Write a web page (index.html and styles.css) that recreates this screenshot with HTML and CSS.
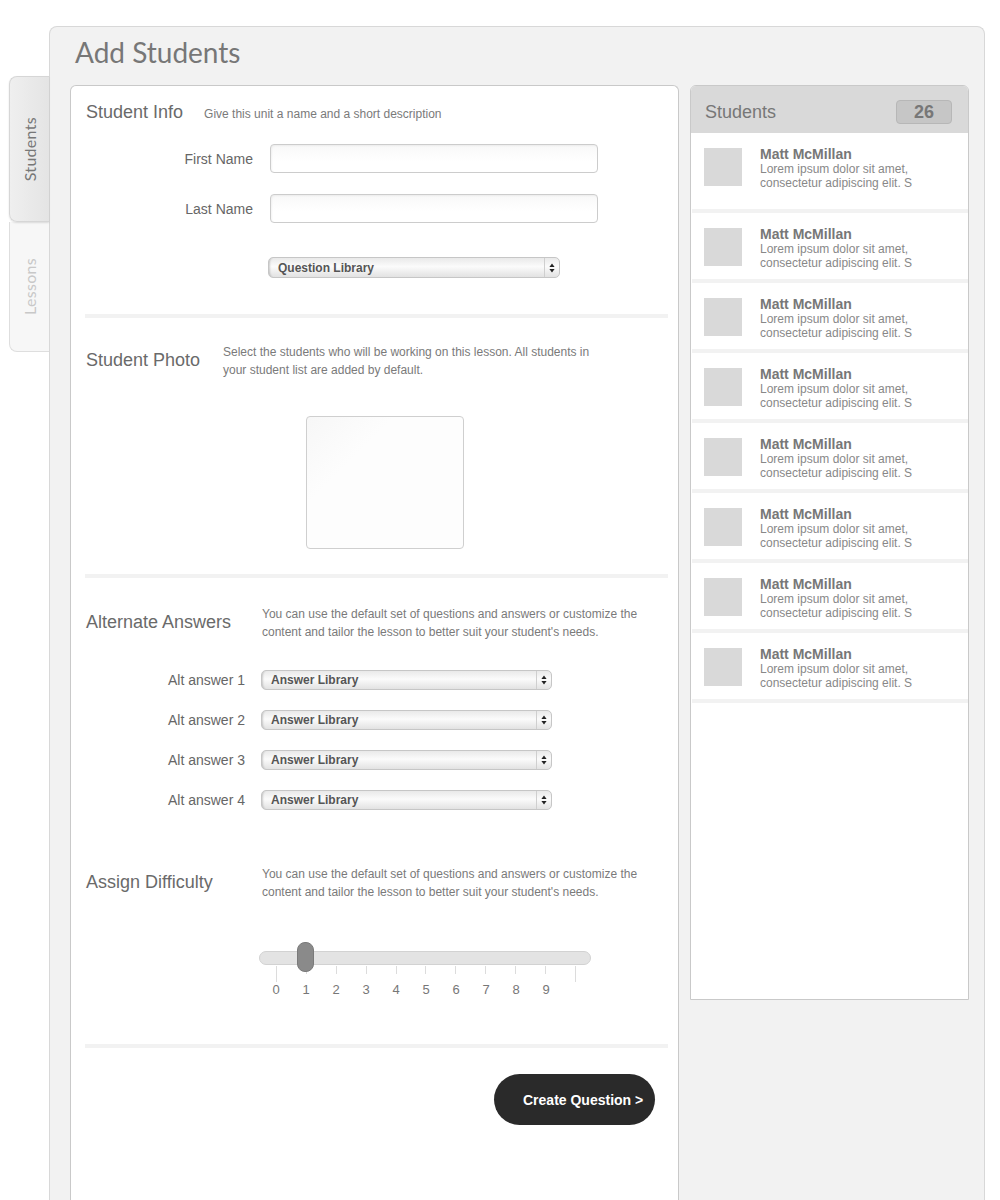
FILE: index.html
```html
<!DOCTYPE html>
<html lang="en">
<head>
  <meta charset="UTF-8">
  <meta name="viewport" content="width=device-width, initial-scale=1.0">
  <title>Add Students</title>
  <link rel="stylesheet" href="styles.css">
</head>
<body>
  <div class="page">
    <nav class="side-tabs">
      <div class="side-tab active"><span>Students</span></div>
      <div class="side-tab"><span>Lessons</span></div>
    </nav>

    <div class="frame">
      <h1 class="frame-title">Add Students</h1>
      <div class="frame-body">
        <form class="editor">
          <section class="block block-info">
            <div class="head head-inline">
              <h2 class="head-title">Student Info</h2>
              <p class="head-desc">Give this unit a name and a short description</p>
            </div>
            <div class="field">
              <label class="field-label">First Name</label>
              <div class="text-input"></div>
            </div>
            <div class="field">
              <label class="field-label">Last Name</label>
              <div class="text-input"></div>
            </div>
            <div class="select select-question">
              <span>Question Library</span>
              <i class="select-arrows"><svg width="6" height="10" viewBox="0 0 6 10"><path d="M3 0.5L5.6 4H0.4z M3 9.5L5.6 6H0.4z" fill="#222"/></svg></i>
            </div>
          </section>

          <div class="rule"></div>

          <section class="block block-photo">
            <div class="head">
              <h2 class="head-title">Student Photo</h2>
              <p class="head-desc">Select the students who will be working on this lesson. All students in<br>your student list are added by default.</p>
            </div>
            <div class="photo-box"></div>
          </section>

          <div class="rule"></div>

          <section class="block block-alt">
            <div class="head head-wide">
              <h2 class="head-title">Alternate Answers</h2>
              <p class="head-desc">You can use the default set of questions and answers or customize the<br>content and tailor the lesson to better suit your student's needs.</p>
            </div>
            <div class="alt-list">
              <div class="alt-row">
                <label class="alt-label">Alt answer 1</label>
                <div class="select"><span>Answer Library</span><i class="select-arrows"><svg width="6" height="10" viewBox="0 0 6 10"><path d="M3 0.5L5.6 4H0.4z M3 9.5L5.6 6H0.4z" fill="#222"/></svg></i></div>
              </div>
              <div class="alt-row">
                <label class="alt-label">Alt answer 2</label>
                <div class="select"><span>Answer Library</span><i class="select-arrows"><svg width="6" height="10" viewBox="0 0 6 10"><path d="M3 0.5L5.6 4H0.4z M3 9.5L5.6 6H0.4z" fill="#222"/></svg></i></div>
              </div>
              <div class="alt-row">
                <label class="alt-label">Alt answer 3</label>
                <div class="select"><span>Answer Library</span><i class="select-arrows"><svg width="6" height="10" viewBox="0 0 6 10"><path d="M3 0.5L5.6 4H0.4z M3 9.5L5.6 6H0.4z" fill="#222"/></svg></i></div>
              </div>
              <div class="alt-row">
                <label class="alt-label">Alt answer 4</label>
                <div class="select"><span>Answer Library</span><i class="select-arrows"><svg width="6" height="10" viewBox="0 0 6 10"><path d="M3 0.5L5.6 4H0.4z M3 9.5L5.6 6H0.4z" fill="#222"/></svg></i></div>
              </div>
            </div>

            <div class="head head-wide head-difficulty">
              <h2 class="head-title">Assign Difficulty</h2>
              <p class="head-desc">You can use the default set of questions and answers or customize the<br>content and tailor the lesson to better suit your student's needs.</p>
            </div>
            <div class="slider">
              <div class="slider-track"></div>
              <div class="slider-thumb"></div>
              <div class="slider-ticks">
                <i class="tall"></i><i></i><i></i><i></i><i></i><i></i><i></i><i></i><i></i><i></i><i class="tall"></i>
              </div>
              <div class="slider-scale">
                <span>0</span><span>1</span><span>2</span><span>3</span><span>4</span><span>5</span><span>6</span><span>7</span><span>8</span><span>9</span>
              </div>
            </div>
          </section>

          <div class="rule rule-last"></div>

          <div class="actions">
            <button type="button" class="btn-create">Create Question &gt;</button>
          </div>
        </form>

        <aside class="roster">
          <div class="roster-head">
            <span class="roster-title">Students</span>
            <span class="roster-count">26</span>
          </div>
          <ul class="roster-list">
            <li class="student first"><div class="avatar"></div><div class="student-info"><div class="student-name">Matt McMillan</div><div class="student-text">Lorem ipsum dolor sit amet,<br>consectetur adipiscing elit. S</div></div></li>
            <li class="student"><div class="avatar"></div><div class="student-info"><div class="student-name">Matt McMillan</div><div class="student-text">Lorem ipsum dolor sit amet,<br>consectetur adipiscing elit. S</div></div></li>
            <li class="student"><div class="avatar"></div><div class="student-info"><div class="student-name">Matt McMillan</div><div class="student-text">Lorem ipsum dolor sit amet,<br>consectetur adipiscing elit. S</div></div></li>
            <li class="student"><div class="avatar"></div><div class="student-info"><div class="student-name">Matt McMillan</div><div class="student-text">Lorem ipsum dolor sit amet,<br>consectetur adipiscing elit. S</div></div></li>
            <li class="student"><div class="avatar"></div><div class="student-info"><div class="student-name">Matt McMillan</div><div class="student-text">Lorem ipsum dolor sit amet,<br>consectetur adipiscing elit. S</div></div></li>
            <li class="student"><div class="avatar"></div><div class="student-info"><div class="student-name">Matt McMillan</div><div class="student-text">Lorem ipsum dolor sit amet,<br>consectetur adipiscing elit. S</div></div></li>
            <li class="student"><div class="avatar"></div><div class="student-info"><div class="student-name">Matt McMillan</div><div class="student-text">Lorem ipsum dolor sit amet,<br>consectetur adipiscing elit. S</div></div></li>
            <li class="student"><div class="avatar"></div><div class="student-info"><div class="student-name">Matt McMillan</div><div class="student-text">Lorem ipsum dolor sit amet,<br>consectetur adipiscing elit. S</div></div></li>
          </ul>
        </aside>
      </div>
    </div>
  </div>
</body>
</html>
```

FILE: styles.css
```css
html, body {
  margin: 0;
  padding: 0;
  background: #fff;
  font-family: "Liberation Sans", Arial, sans-serif;
  color: #666;
  overflow: hidden;
}
.page {
  display: flex;
  align-items: flex-start;
  padding: 26px 0 0 9px;
}

/* left tabs */
.side-tabs {
  width: 40px;
  margin-top: 50px;
  display: flex;
  flex-direction: column;
}
.side-tab {
  height: 130px;
  display: flex;
  align-items: center;
  justify-content: center;
  box-sizing: border-box;
  background: #f7f7f7;
  border: 1px solid #dedede;
  border-top: none;
  border-right: none;
  border-radius: 0 0 0 8px;
  font-family: Lato, "Open Sans", sans-serif;
  font-size: 16px;
  color: #c8c8c8;
}
.side-tab span {
  writing-mode: vertical-rl;
  transform: rotate(180deg);
  letter-spacing: 0.3px;
}
.side-tab.active {
  height: 146px;
  background: linear-gradient(to right, #efefef, #e4e4e4);
  border: 1px solid #d6d6d6;
  border-right: none;
  border-radius: 8px 0 0 8px;
  box-shadow: 0 1px 2px rgba(0,0,0,0.12);
  color: #777;
  position: relative;
  z-index: 1;
}

/* main frame */
.frame {
  width: 936px;
  min-height: 1180px;
  box-sizing: border-box;
  background: #f2f2f2;
  border: 1px solid #d8d8d8;
  border-bottom: none;
  border-radius: 8px 8px 0 0;
  padding: 0 15px 0 20px;
}
.frame-title {
  margin: 0 0 16px;
  padding: 8px 0 0 5px;
  height: 34px;
  line-height: 34px;
  font-family: Lato, "Open Sans", sans-serif;
  font-weight: 400;
  font-size: 28px;
  color: #777;
}
.frame-body {
  display: flex;
  align-items: flex-start;
  gap: 11px;
}

/* editor column */
.editor {
  width: 609px;
  min-height: 1130px;
  box-sizing: border-box;
  background: #fff;
  border: 1px solid #c9c9c9;
  border-bottom: none;
  border-radius: 6px 6px 0 0;
  margin: 0;
}
.block {
  padding-left: 15px;
}
.block-info { padding-top: 15px; }
.block-photo { padding-top: 25px; }
.block-alt { padding-top: 27px; }

.head {
  display: flex;
  align-items: flex-start;
}
.head-title {
  margin: 6px 0 0;
  width: 137px;
  flex-shrink: 0;
  font-weight: 400;
  font-size: 18px;
  line-height: 22px;
  color: #6a6a6a;
}
.head-desc {
  margin: 0;
  font-size: 12px;
  line-height: 18px;
  color: #7a7a7a;
}
.head-inline {
  align-items: baseline;
}
.head-inline .head-title {
  width: auto;
  margin: 0 21px 0 0;
}
.head-wide .head-title {
  width: 176px;
}
.head-difficulty {
  margin-top: 55px;
}

.rule {
  height: 4px;
  background: #f2f2f2;
  margin: 36px 10px 0 14px;
}
.block-photo + .rule { margin-top: 25px; }
.rule-last { margin-top: 46px; }

/* fields */
.field {
  display: flex;
  align-items: center;
  margin-top: 21px;
}
.field-label {
  width: 167px;
  margin-right: 17px;
  text-align: right;
  font-size: 14px;
  color: #666;
}
.text-input {
  width: 328px;
  height: 29px;
  box-sizing: border-box;
  border: 1px solid #cccccc;
  border-radius: 4px;
  background: linear-gradient(#f8f8f8, #fff 60%);
  box-shadow: inset 1px 1px 2px rgba(0,0,0,0.05);
}

.select {
  width: 291px;
  height: 20px;
  box-sizing: border-box;
  display: flex;
  align-items: center;
  border: 1px solid #c6c6c6;
  border-radius: 5px;
  background: linear-gradient(#e9e9e9, #fbfbfb 45%, #f4f4f4 60%, #e2e2e2);
  box-shadow: inset 3px 0 2px -2px rgba(0,0,0,0.18);
  font-size: 12px;
  font-weight: bold;
  color: #555;
}
.select span {
  flex: 1;
  padding-left: 9px;
}
.select-arrows {
  width: 15px;
  height: 100%;
  box-sizing: border-box;
  border-left: 1px solid #cfcfcf;
  display: flex;
  align-items: center;
  justify-content: center;
}
.select-question {
  width: 292px;
  height: 21px;
  margin: 34px 0 0 182px;
}

.photo-box {
  width: 158px;
  height: 133px;
  box-sizing: border-box;
  margin: 37px 0 0 220px;
  border: 1px solid #cfcfcf;
  border-radius: 4px;
  background: linear-gradient(135deg, #f7f7f7, #fdfdfd 30%);
}

.alt-list {
  margin-top: 29px;
}
.alt-row {
  display: flex;
  align-items: center;
  margin-bottom: 20px;
}
.alt-row:last-child { margin-bottom: 0; }
.alt-label {
  width: 159px;
  margin-right: 16px;
  text-align: right;
  font-size: 14px;
  color: #666;
}

/* slider */
.slider {
  position: relative;
  width: 332px;
  margin: 41px 0 0 173px;
  padding-top: 9px;
}
.slider-track {
  height: 14px;
  box-sizing: border-box;
  background: #e3e3e3;
  border: 1px solid #d2d2d2;
  border-radius: 7px;
}
.slider-thumb {
  position: absolute;
  top: 0;
  left: 38px;
  width: 17px;
  height: 30px;
  box-sizing: border-box;
  background: #8a8a8a;
  border: 1px solid #7a7a7a;
  border-radius: 8px;
}
.slider-ticks {
  display: flex;
  justify-content: space-between;
  align-items: flex-start;
  width: 300px;
  height: 16px;
  margin: 1px 0 0 17px;
}
.slider-ticks i {
  width: 1px;
  height: 8px;
  background: #dcdcdc;
}
.slider-ticks i.tall { height: 16px; }
.slider-scale {
  display: flex;
  margin-left: 2px;
}
.slider-scale span {
  width: 30px;
  text-align: center;
  font-size: 13px;
  line-height: 16px;
  color: #777;
}

.actions {
  display: flex;
  justify-content: flex-end;
  padding: 26px 23px 0 0;
}
.btn-create {
  width: 161px;
  height: 51px;
  padding: 0 0 0 29px;
  text-align: left;
  border: none;
  border-radius: 26px;
  background: #2a2a2a;
  color: #fff;
  font-family: "Liberation Sans", Arial, sans-serif;
  font-weight: bold;
  font-size: 14px;
}

/* roster */
.roster {
  width: 279px;
  height: 915px;
  box-sizing: border-box;
  background: #fff;
  border: 1px solid #c9c9c9;
  border-radius: 6px 6px 0 0;
  overflow: hidden;
}
.roster-head {
  height: 47px;
  box-sizing: border-box;
  display: flex;
  align-items: center;
  justify-content: space-between;
  padding: 5px 16px 0 14px;
  background: #d9d9d9;
}
.roster-title {
  font-size: 18px;
  color: #777;
}
.roster-count {
  width: 56px;
  height: 24px;
  box-sizing: border-box;
  display: flex;
  align-items: center;
  justify-content: center;
  background: #c6c6c6;
  border: 1px solid #b7b7b7;
  border-radius: 4px;
  font-weight: bold;
  font-size: 18px;
  color: #777;
}
.roster-list {
  list-style: none;
  margin: 0;
  padding: 0;
}
.student {
  display: flex;
  align-items: flex-start;
  height: 70px;
  box-sizing: border-box;
  padding: 13px 0 0 13px;
  border-bottom: 4px solid #f2f2f2;
  margin-left: 1px;
}
.student.first { height: 80px; }
.avatar {
  width: 38px;
  height: 38px;
  margin: 2px 18px 0 -1px;
  background: #d9d9d9;
  flex-shrink: 0;
}
.student-name {
  font-size: 14px;
  font-weight: bold;
  line-height: 16px;
  color: #777;
}
.student-text {
  font-size: 12px;
  line-height: 14px;
  color: #888;
}
```
